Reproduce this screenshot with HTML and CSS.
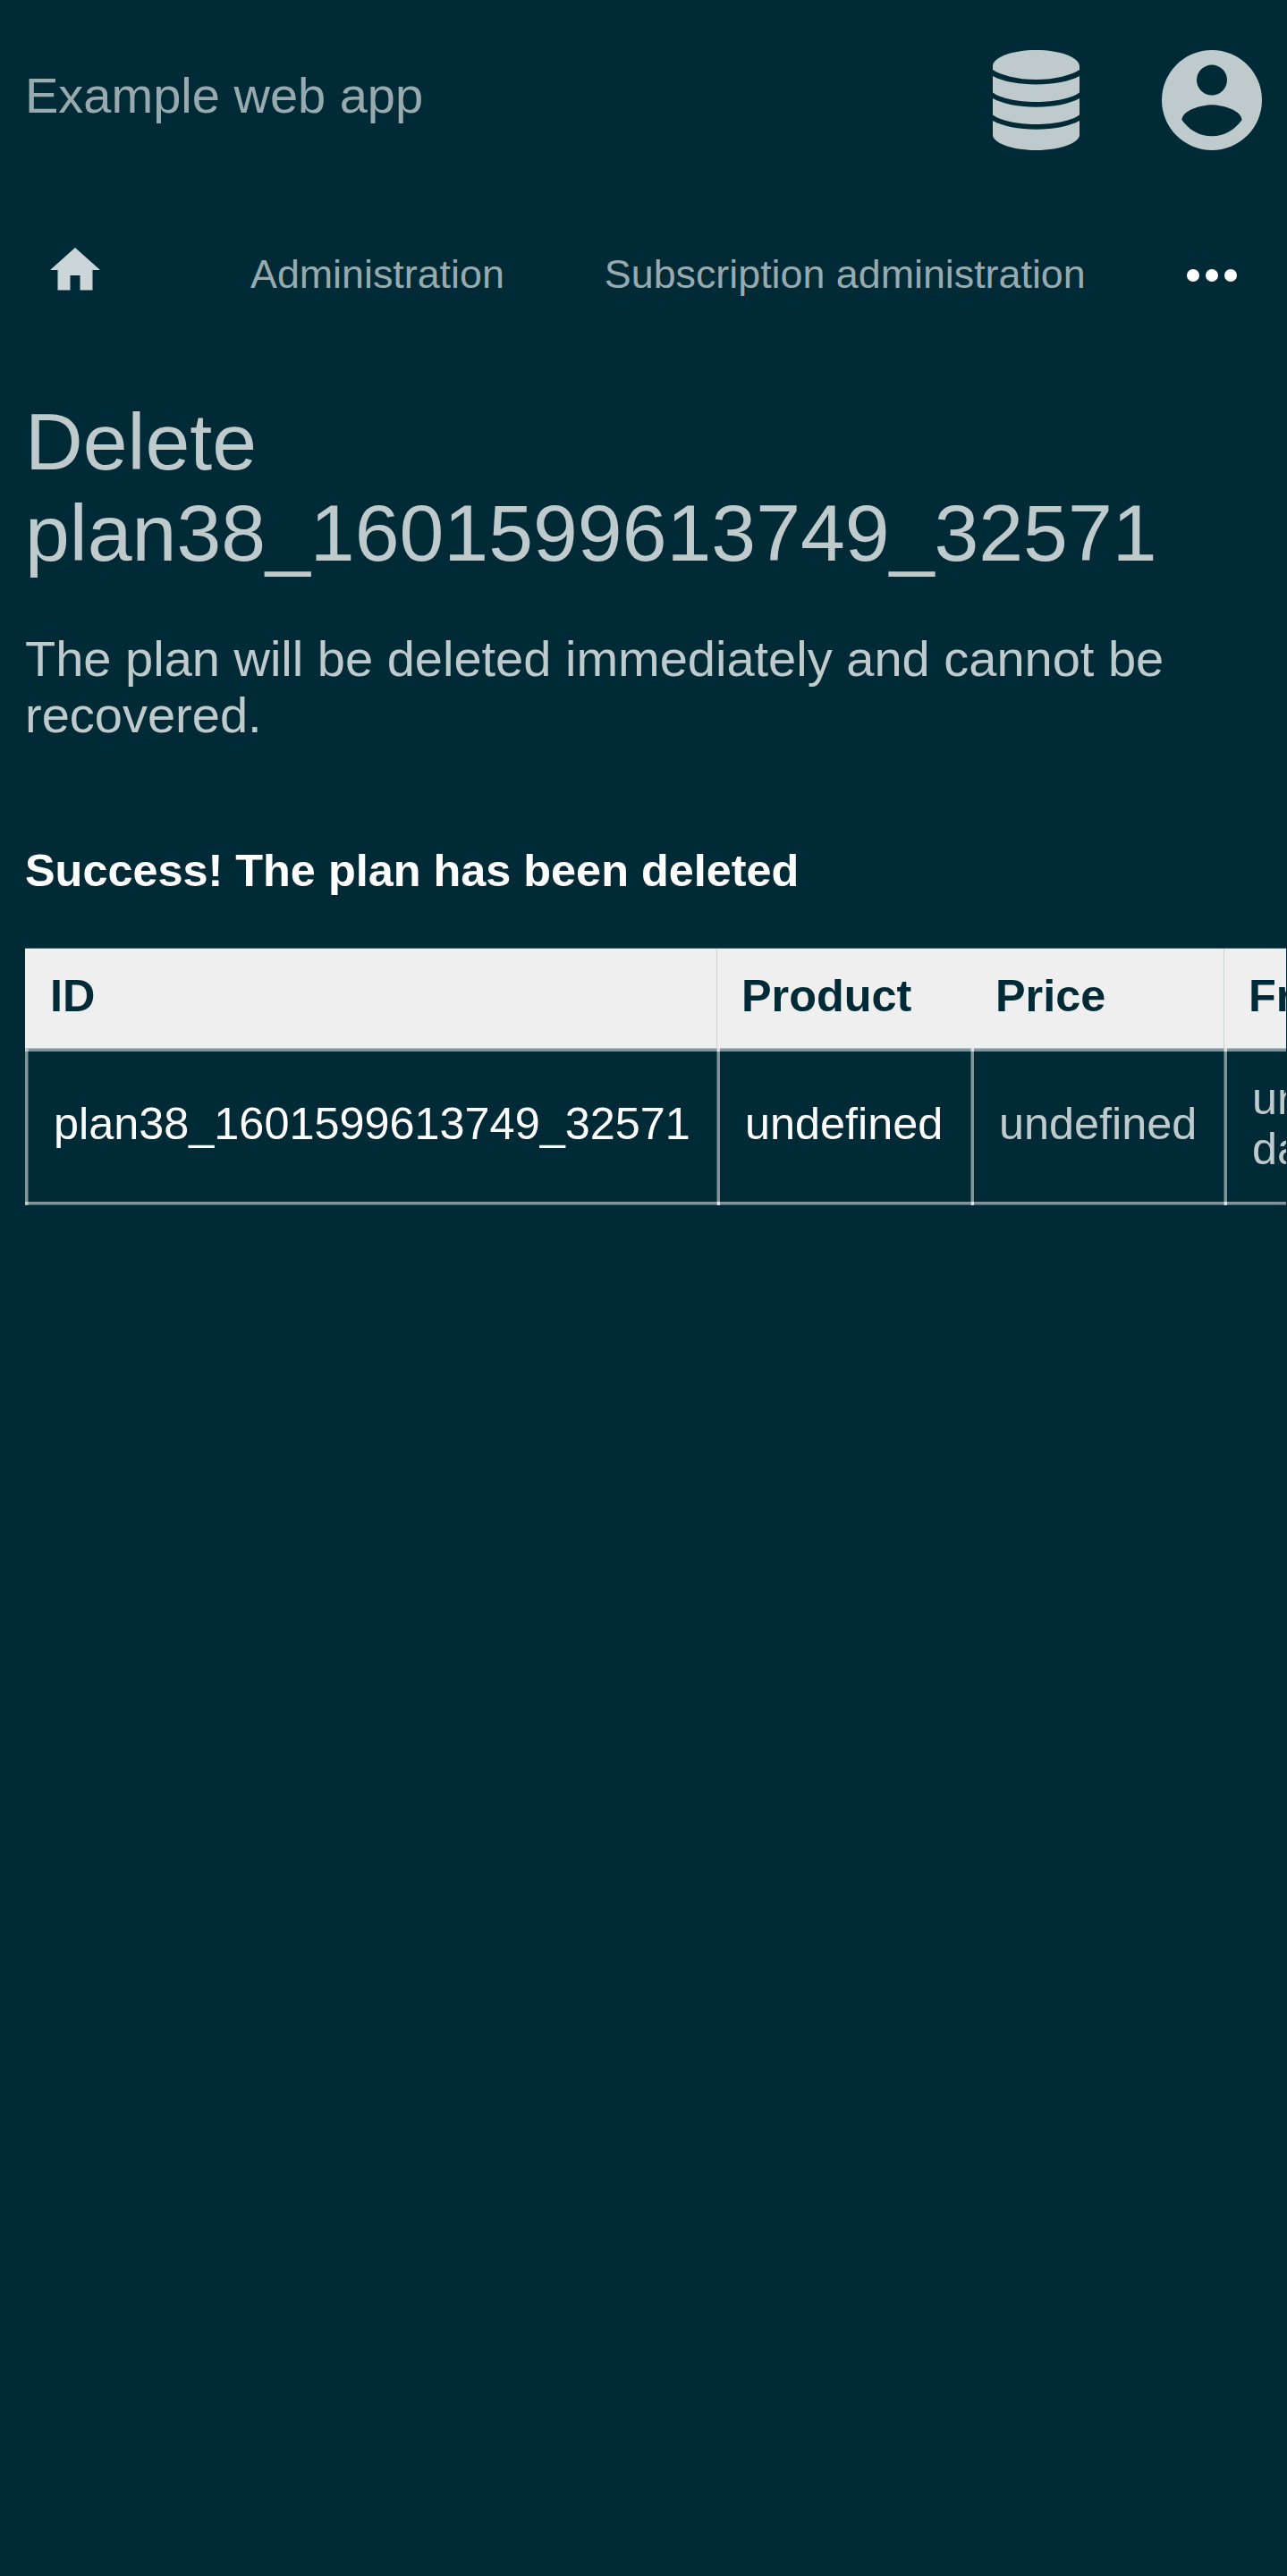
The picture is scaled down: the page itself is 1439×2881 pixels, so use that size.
FILE: index.html
```html
<!DOCTYPE html>
<html lang="en">
<head>
<meta charset="utf-8">
<title>Delete plan</title>
<link rel="stylesheet" href="styles.css">
</head>
<body>
<div class="page">
  <header class="header">
    <a class="brand">Example web app</a>
    <div class="actions">
      <svg class="icon-db" viewBox="0 0 97 112"><path d="M0 18C0 8 22 0 48.500 0S97 8 97 18v4C88 28 70 33 48.500 33S9 28 0 22zM0 29c11 6 29 9.500 48.500 9.500S86 35 97 29v18.500c-8 6-27 10.500-48.500 10.500S8 53.500 0 47.500zM0 54c11 6 29 9.800 48.500 9.800S86 60 97 54v18.500C89 78.500 70 83 48.500 83S8 78.500 0 72.500zM0 79c11 6 29 9.800 48.500 9.800S86 85 97 79v16c0 8-20 17-48.500 17S0 103 0 95z"/></svg>
      <svg class="icon-user" viewBox="0 0 112 112"><path fill-rule="evenodd" d="M56 0a56 56 0 1 0 0 112A56 56 0 1 0 56 0zM56 16.600a17 17 0 1 1 0 34 17 17 0 1 1 0-34zM56 96.300c-14 0-26-7.200-33.500-18C22.500 67.500 44 61.300 56 61.300s33.500 6.200 33.500 17C82 89 70 96.300 56 96.300z"/></svg>
    </div>
  </header>
  <nav class="nav">
    <svg class="icon-home" viewBox="0 0 56 48"><path d="M28 0 56 25H47.500V47.500H33.500V31H22.500V47.500H8.500V25H0z"/></svg>
    <a class="nav-admin">Administration</a>
    <a class="nav-sub">Subscription administration</a>
    <svg class="icon-more" viewBox="0 0 56 14"><circle cx="7" cy="7" r="7"/><circle cx="28" cy="7" r="7"/><circle cx="49" cy="7" r="7"/></svg>
  </nav>
  <main class="content">
    <h1>Delete plan38_1601599613749_32571</h1>
    <p class="intro">The plan will be deleted immediately and cannot be recovered.</p>
    <div class="message">Success! The plan has been deleted</div>
    <table class="plans">
      <thead><tr><th class="c-id">ID</th><th class="c-product">Product</th><th class="c-price">Price</th><th class="c-freq">Frequency</th></tr></thead>
      <tbody><tr><td class="strong">plan38_1601599613749_32571</td><td class="strong">undefined</td><td>undefined</td><td>undefined days</td></tr></tbody>
    </table>
  </main>
</div>
</body>
</html>
```
FILE: styles.css
```css
* { box-sizing: border-box; }
html { background: #002b36; }
body { margin: 0; overflow: hidden; font-family: "Liberation Sans", Arial, sans-serif; color: #bfcacd; }
.page { width: 1438px; height: 2881px; overflow: hidden; }
svg { display: block; fill: #bfcacd; flex: none; }
.header { display: flex; justify-content: space-between; height: 224px; padding: 56px 27.5px 0 28px; }
.brand { font-size: 56px; line-height: 64px; padding-top: 19px; color: #99aaaf; }
.actions { display: flex; gap: 92px; }
.icon-db { width: 97px; height: 112px; }
.icon-user { width: 112px; height: 112px; }
.nav { display: flex; height: 224px; padding: 0 55.5px 0 56px; font-size: 44.8px; line-height: 52px; color: #99aaaf; }
.nav a { padding-top: 56px; white-space: nowrap; }
.nav-admin { margin-left: 168px; }
.nav-sub { margin-left: 112px; }
.icon-home { width: 56px; height: 48px; margin-top: 53px; fill: #ccd5d7; }
.icon-more { width: 56px; height: 14px; margin: 77px 0 0 auto; fill: #fff; }
.content { padding-left: 28px; }
h1 { margin: -5px 28px 0 0; font-size: 89.6px; font-weight: 400; line-height: 102px; }
.intro { margin: 58px 28px 0 0; font-size: 56px; line-height: 63px; }
.message { margin-top: 114px; font-size: 50.4px; font-weight: 700; line-height: 58px; color: #fff; }
.plans { width: 1700px; margin-top: 57px; table-layout: fixed; border-spacing: 0; font-size: 50.4px; line-height: 56px; }
th { height: 112px; padding: 0 28px 4px; background: #efefef; color: #002b36; text-align: left; vertical-align: middle; box-shadow: inset 0 1px #4c6c74; }
.c-id { width: 773px; }
.c-product { width: 284px; }
.c-price { width: 283px; }
.c-product, .c-freq { box-shadow: inset 0 1px #4c6c74, inset 1px 0 #ced3d4; }
td {
  --line: rgba(255, 255, 255, 0.5);
  --soft: rgba(255, 255, 255, 0.25);
  height: 176px;
  padding: 0 28px 7px 32px;
  background:
    linear-gradient(#b3c0c3 1px, var(--line) 1px) 0 0 / 100% 4px no-repeat,
    linear-gradient(var(--line) 3px, var(--soft) 3px) 0 100% / 100% 4px no-repeat,
    linear-gradient(90deg, var(--line) 3px, var(--soft) 3px) 0 0 / 4px 100% no-repeat;
}
td + td {
  background:
    linear-gradient(var(--line), var(--line)) 1px 0 / 3px 4px no-repeat,
    linear-gradient(var(--line), var(--line)) 1px 100% / 3px 4px no-repeat,
    linear-gradient(#b3c0c3 1px, var(--line) 1px) 0 0 / 100% 4px no-repeat,
    linear-gradient(var(--line) 3px, var(--soft) 3px) 0 100% / 100% 4px no-repeat,
    linear-gradient(90deg, var(--soft) 1px, var(--line) 1px) 0 0 / 4px 100% no-repeat;
}
td:last-child { padding-right: 80px; }
.strong { color: #fff; }
```
